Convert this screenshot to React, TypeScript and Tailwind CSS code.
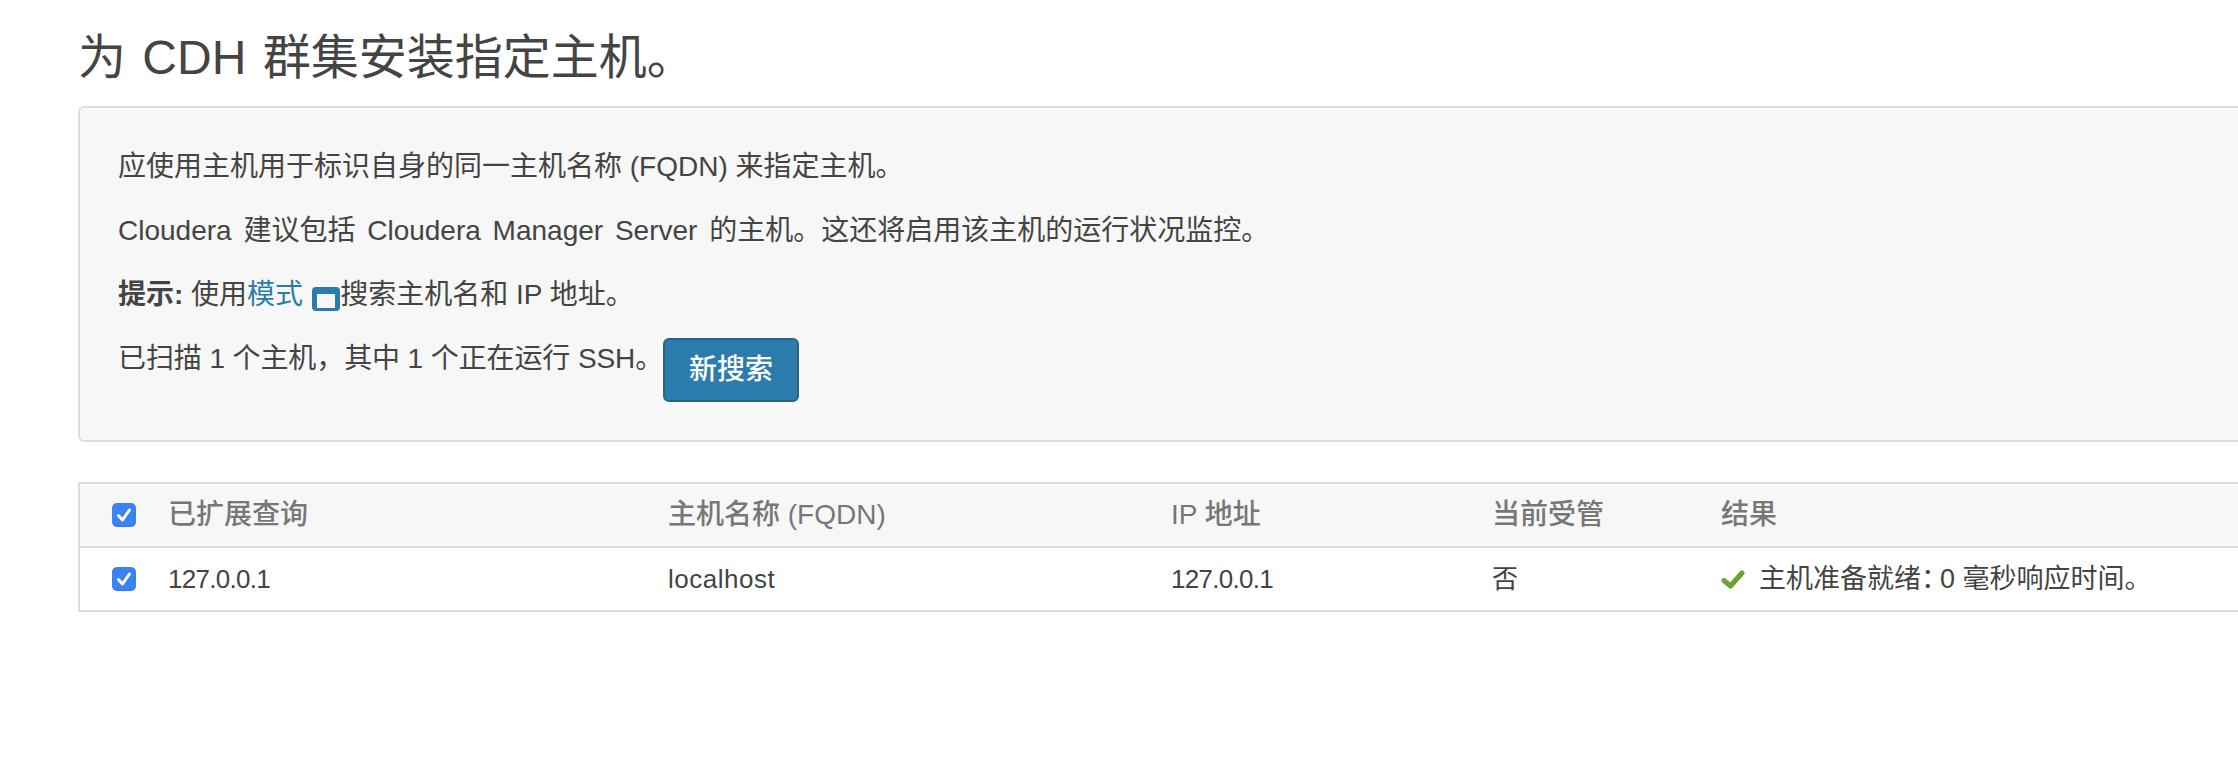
const columns = 'grid grid-cols-[88px_500px_503px_321px_229px_1fr] items-center';

function BlueCheckbox() {
  return (
    <span className="flex h-6 w-6 items-center justify-center rounded-[5px] bg-[#3b82f6] shadow-[inset_0_-1px_0_rgba(0,0,0,0.08)]">
      <svg viewBox="0 0 24 24" className="h-6 w-6" fill="none" stroke="#fff" strokeWidth="3" strokeLinecap="round" strokeLinejoin="round">
        <path d="M6.5 12.5l4 4.5 7-10" />
      </svg>
    </span>
  );
}

function WindowIcon() {
  return (
    <svg viewBox="0 0 28 24" className="ml-[9px] inline-block h-6 w-7 align-[-7px]">
      <path fillRule="evenodd" fill="#2b7cac" d="M4 0h20a4 4 0 0 1 4 4v16a4 4 0 0 1-4 4H4a4 4 0 0 1-4-4V4a4 4 0 0 1 4-4zM5 7v14h18V7z" />
    </svg>
  );
}

function GreenCheck() {
  return (
    <svg viewBox="0 0 24 19" className="mr-[14px] h-[19px] w-6" fill="none" stroke="#6aa32d" strokeWidth="5" strokeLinecap="round" strokeLinejoin="round">
      <path d="M3 10.5l6.5 5.5L21 3" />
    </svg>
  );
}

export default function App() {
  return (
    <div className="h-[772px] w-[2238px] overflow-hidden bg-white pl-[78px] text-[28px] leading-[40px] text-[#444] [font-family:'Liberation_Sans','Noto_Sans_CJK_SC',sans-serif]">
      <h1 className="pt-[33px] text-[48px] leading-[50px] font-normal text-[#444] [word-spacing:3px]">为 CDH 群集安装指定主机。</h1>

      <div className="mt-[23px] h-[336px] rounded-l-[6px] border-2 border-r-0 border-[#ddd] bg-[#f7f7f7] pl-[38px] pt-[39px]">
        <p className="mb-[24px]">应使用主机用于标识自身的同一主机名称 (FQDN) 来指定主机。</p>
        <p className="mb-[24px] [word-spacing:4px]">Cloudera 建议包括 Cloudera Manager Server 的主机。这还将启用该主机的运行状况监控。</p>
        <p className="mb-[24px]">
          <strong className="font-bold">提示:</strong> 使用<a className="text-[#2b7cac]">模式</a>
          <WindowIcon />
          搜索主机名和 IP 地址。
        </p>
        <p className="flex items-start">
          <span className="tracking-[-0.1px]">已扫描 1 个主机，其中 1 个正在运行 SSH。</span>
          <button className="mt-[-1px] h-16 w-[136px] rounded-[6px] border-2 border-[#2a6485] bg-[#2b7cac] text-center text-[28px] font-medium text-white">
            新搜索
          </button>
        </p>
      </div>

      <div className="mt-[40px] border-y-2 border-l-2 border-[#ddd]">
        <div className={`${columns} h-[64px] border-b-2 border-[#ddd] bg-[#f7f7f7] font-medium text-[#777]`}>
          <span className="pl-[32px]"><BlueCheckbox /></span>
          <span>已扩展查询</span>
          <span>主机名称 (FQDN)</span>
          <span>IP 地址</span>
          <span>当前受管</span>
          <span>结果</span>
        </div>
        <div className={`${columns} h-[62px] text-[26px]`}>
          <span className="pl-[32px]"><BlueCheckbox /></span>
          <span className="tracking-[-0.7px]">127.0.0.1</span>
          <span className="tracking-[0.5px]">localhost</span>
          <span className="tracking-[-0.7px]">127.0.0.1</span>
          <span>否</span>
          <span className="flex items-center text-[27px]">
            <GreenCheck />
            <span>主机准备就绪<span className="tracking-[-8px]">：</span>0 毫秒响应时间。</span>
          </span>
        </div>
      </div>
    </div>
  );
}
